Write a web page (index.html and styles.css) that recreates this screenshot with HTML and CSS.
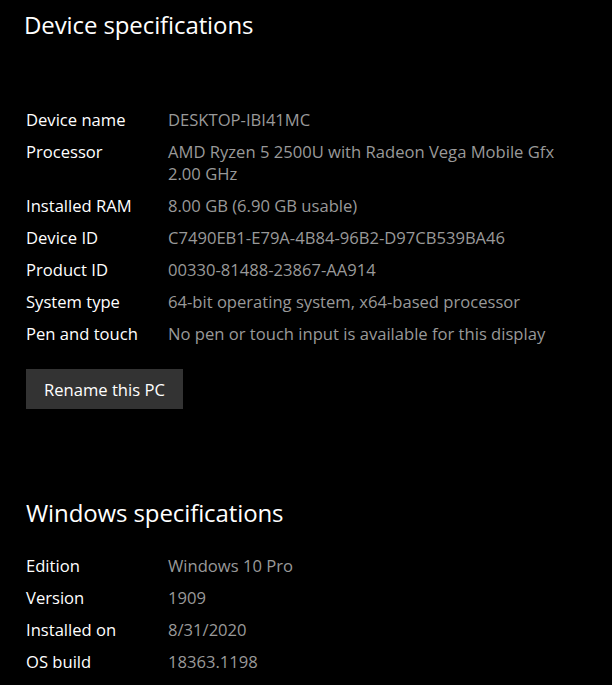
FILE: index.html
```html
<!DOCTYPE html>
<html>
<head>
<meta charset="utf-8">
<link rel="stylesheet" href="styles.css">
</head>
<body>
<main class="page">
  <h1 class="title">Device specifications</h1>
  <dl class="specs specs-device">
    <dt>Device name</dt><dd>DESKTOP-IBI41MC</dd>
    <dt>Processor</dt><dd>AMD Ryzen 5 2500U with Radeon Vega Mobile Gfx<br>2.00 GHz</dd>
    <dt>Installed RAM</dt><dd>8.00 GB (6.90 GB usable)</dd>
    <dt>Device ID</dt><dd>C7490EB1-E79A-4B84-96B2-D97CB539BA46</dd>
    <dt>Product ID</dt><dd>00330-81488-23867-AA914</dd>
    <dt>System type</dt><dd>64-bit operating system, x64-based processor</dd>
    <dt>Pen and touch</dt><dd>No pen or touch input is available for this display</dd>
  </dl>
  <button class="btn">Rename this PC</button>
  <h1 class="title title-windows">Windows specifications</h1>
  <dl class="specs specs-windows">
    <dt>Edition</dt><dd>Windows 10 Pro</dd>
    <dt>Version</dt><dd>1909</dd>
    <dt>Installed on</dt><dd>8/31/2020</dd>
    <dt>OS build</dt><dd>18363.1198</dd>
  </dl>
</main>
</body>
</html>
```
FILE: styles.css
```css
html, body {
  margin: 0;
  background: #000;
}
body {
  font-family: "Open Sans", "Noto Sans", sans-serif;
  color: #fff;
}
.page {
  padding: 9px 0 0 26px;
  display: flex;
  flex-direction: column;
  align-items: flex-start;
}
.title {
  margin: 0 0 0 -2px;
  font-size: 24px;
  line-height: 32px;
  font-weight: 400;
  letter-spacing: -0.1px;
}
.title-windows {
  margin: 88px 0 0 0;
}
.specs {
  display: grid;
  grid-template-columns: 142px auto;
  row-gap: 10px;
  margin: 68px 0 0 0;
  font-size: 16.6px;
  line-height: 22px;
}
.specs-windows {
  margin-top: 26px;
}
.specs dt {
  color: #fff;
}
.specs dd {
  margin: 0;
  color: #999;
}
.btn {
  margin-top: 24px;
  height: 40px;
  padding: 0 18px;
  background: #333;
  border: none;
  color: #fff;
  font-family: inherit;
  font-size: 16.6px;
}
```
